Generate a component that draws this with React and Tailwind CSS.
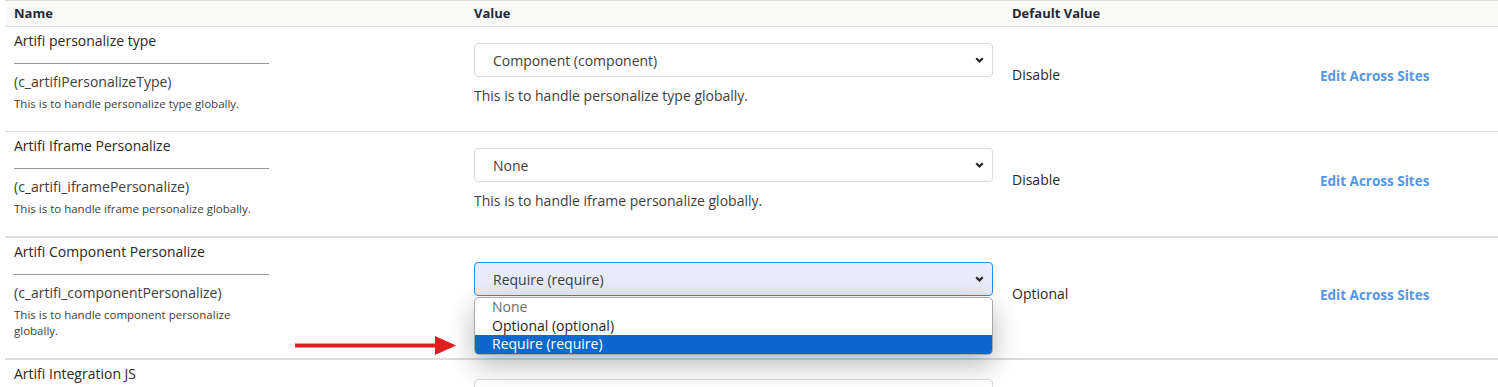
import React from 'react';

const settings = [
    {
        name: 'Artifi personalize type',
        code: '(c_artifiPersonalizeType)',
        desc: 'This is to handle personalize type globally.',
        value: 'Component (component)',
        defaultValue: 'Disable',
        border: 'border-b',
        pad: 'pb-[19px]',
    },
    {
        name: 'Artifi Iframe Personalize',
        code: '(c_artifi_iframePersonalize)',
        desc: 'This is to handle iframe personalize globally.',
        value: 'None',
        defaultValue: 'Disable',
        border: 'border-b-2',
        pad: 'pb-[19px]',
    },
    {
        name: 'Artifi Component Personalize',
        code: '(c_artifi_componentPersonalize)',
        desc: 'This is to handle component personalize globally.',
        value: 'Require (require)',
        defaultValue: 'Optional',
        open: true,
        border: 'border-b-2',
        pad: 'pb-[19px]',
    },
    {
        name: 'Artifi Integration JS',
        code: '(c_artifi_integrationJS)',
        desc: 'This is to handle integration JS file path globally.',
        value: 'None',
        defaultValue: 'Disable',
        border: 'border-b-2',
        pad: 'pb-[25px]',
    },
];

const options = ['None', 'Optional (optional)', 'Require (require)'];

function Chevron() {
    return (
        <svg width="9" height="6" viewBox="0 0 9 6" className="shrink-0">
            <path d="M1.2 1.2l3.3 3.2 3.3-3.2" stroke="#2b2826" strokeWidth="2.2" fill="none" />
        </svg>
    );
}

function SelectBox({ value, open }) {
    return (
        <div className="relative">
            <div
                className={`h-[34px] flex items-center justify-between pl-[18px] pr-[8px] rounded-[4px] border text-[14px] text-[#3e3e3c] ${open ? 'bg-[#e8ebfa] border-[#2a8de8]' : 'bg-white border-[#dddbda]'}`}
            >
                <span>{value}</span>
                <Chevron />
            </div>
            {open && (
                <div className="absolute left-0 right-0 top-[35px] z-10 bg-white border border-[#a8a8a8] rounded-[5px] overflow-hidden shadow-[0_10px_28px_rgba(0,0,0,0.28)] text-[14px] leading-[18px]">
                    {options.map((option, index) => (
                        <div
                            key={index}
                            className={`pl-[17px] h-[18.5px] flex items-center ${option === value ? 'bg-[#0a68d0] text-white' : index === 0 ? 'text-[#6d6d6d]' : 'text-[#1f1f1f]'}`}
                        >
                            {option}
                        </div>
                    ))}
                </div>
            )}
        </div>
    );
}

export default function App() {
    return (
        <div className="relative w-[1498px] h-[387px] overflow-hidden bg-white font-['Open_Sans',sans-serif] text-[#2b2826]">
            <table className="ml-[5px] w-[1493px] table-fixed border-collapse">
                <colgroup>
                    <col className="w-[460px]" />
                    <col className="w-[538px]" />
                    <col className="w-[300px]" />
                    <col className="w-[195px]" />
                </colgroup>
                <thead>
                    <tr className="h-[26px] bg-[#fafaf9] border-t border-b border-[#dddbda] text-left text-[13px] font-bold text-[#1f2a36]">
                        <th className="pl-[9px] font-bold">Name</th>
                        <th className="pl-[9px] font-bold">Value</th>
                        <th className="pl-[9px] font-bold">Default Value</th>
                        <th></th>
                    </tr>
                </thead>
                <tbody>
                    {settings.map((setting, index) => (
                        <tr key={index} className={`${setting.border} border-[#dedcdc]`}>
                            <td className={`align-top pl-[9px] pt-[4px] ${setting.pad}`}>
                                <div className="w-[255px]">
                                    <div className="text-[14px] leading-[20px]">{setting.name}</div>
                                    <div className="mt-[12px] h-px bg-[#999999]"></div>
                                    <div className="mt-[8px] text-[14px] leading-[20px] text-[#3e3e3c]">{setting.code}</div>
                                    <div className="mt-[4px] text-[11.5px] leading-[16px] text-[#3e3e3c]">{setting.desc}</div>
                                </div>
                            </td>
                            <td className="align-middle pl-[9px] pr-[10px]">
                                <SelectBox value={setting.value} open={setting.open} />
                                <p className="mt-[10px] mb-[10px] text-[14px] leading-[18px] text-[#3e3e3c]">{setting.desc}</p>
                            </td>
                            <td className="align-middle pl-[9px] pb-[10px] text-[14px]">{setting.defaultValue}</td>
                            <td className="align-middle pl-[17px] pb-[8px]">
                                <a className="text-[13.5px] font-bold text-[#5596e6] cursor-pointer">Edit Across Sites</a>
                            </td>
                        </tr>
                    ))}
                </tbody>
            </table>

            {/* red pointer arrow */}
            <svg className="absolute left-[295px] top-[336px]" width="162" height="20" viewBox="0 0 162 20">
                <rect x="0" y="7.5" width="142" height="4" fill="#e21d1d" />
                <path d="M140 0 L161 9.5 L140 19 Z" fill="#e21d1d" />
            </svg>
        </div>
    );
}
